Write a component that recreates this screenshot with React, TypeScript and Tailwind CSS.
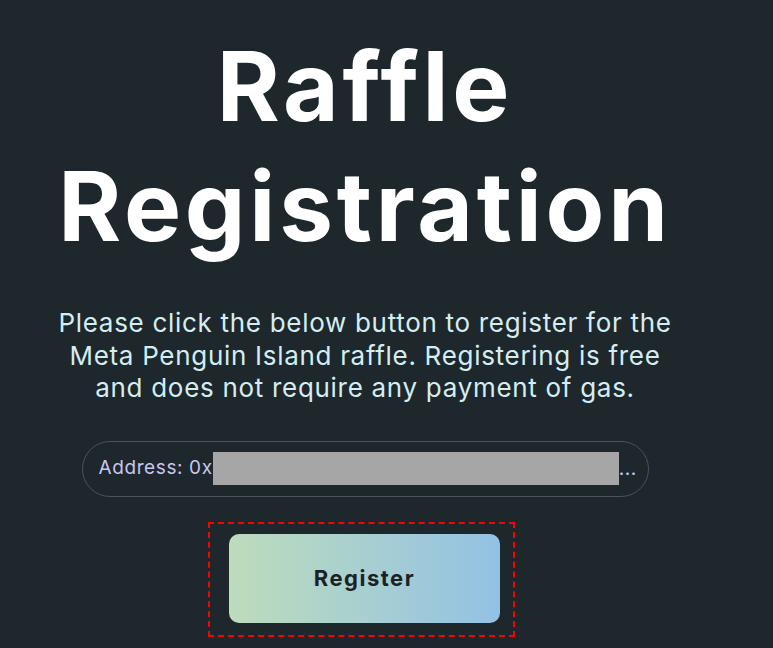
export default function App() {
  return (
    <div
      className="min-h-[648px] w-full bg-[#1e272c] overflow-hidden"
      style={{ fontFamily: "Inter, 'Noto Sans', sans-serif" }}
    >
      <div className="w-[730px] flex flex-col items-center">
        <h1 className="mt-[26px] text-[96px] leading-[120px] font-bold text-white text-center tracking-[3.8px]">
          Raffle
          <br />
          Registration
        </h1>
        <p className="mt-[41px] text-[26px] leading-[32.5px] text-[#d3edf1] text-center w-[630px] tracking-[0.7px]">
          Please click the below button to register for the Meta Penguin Island raffle. Registering is free and does not require any payment of gas.
        </p>
        <div className="mt-[36px] w-[567px] h-[56px] rounded-full border border-[#4b5559] flex items-center pl-[16px]">
          <span className="text-[19px] tracking-[0.6px] text-[#c8c6ef]">Address: 0x</span>
          <span className="inline-block w-[406px] h-[33px] bg-[#a6a6a6]" />
          <span className="text-[19px] tracking-[0.6px] text-[#c8c6ef] pt-[2px]">...</span>
        </div>
        <div className="mt-[25px] mr-[7px] border-2 border-dashed border-[#ff0000] pt-[10px] pb-[12px] pl-[19px] pr-[13px]">
          <button className="w-[271px] h-[89px] rounded-[10px] bg-gradient-to-r from-[#bddcbb] to-[#93c1e4] text-[22px] tracking-[1.5px] font-bold text-[#1b2226]">
            Register
          </button>
        </div>
      </div>
    </div>
  );
}
